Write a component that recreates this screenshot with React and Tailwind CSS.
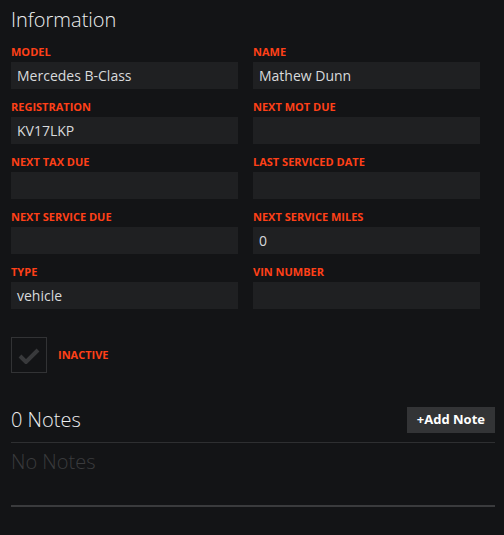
const fields = [
  ["Model", "Mercedes B-Class"],
  ["Name", "Mathew Dunn"],
  ["Registration", "KV17LKP"],
  ["Next MOT Due", ""],
  ["Next Tax Due", ""],
  ["Last Serviced Date", ""],
  ["Next Service Due", ""],
  ["Next Service Miles", "0"],
  ["Type", "vehicle"],
  ["VIN Number", ""],
];

const Field = ({ label, value }) => (
  <div className="pr-[15px] mb-[10px]">
    <div className="h-[15px] leading-[15px] text-[11px] font-bold uppercase text-[#ff4018]">
      {label}
    </div>
    <div className="mt-[3px] h-[27px] bg-[#1f2022] px-[6px] flex items-center text-[14px] text-[#d8dadc]">
      {value}
    </div>
  </div>
);

export default function App() {
  return (
    <div
      className="min-h-[535px] bg-[#131416] pl-[11px] pr-[9px] pt-[6px]"
      style={{ fontFamily: '"Open Sans", sans-serif' }}
    >
      <h2 className="h-[28px] leading-[28px] text-[20px] font-light text-[#eceeef]">
        Information
      </h2>

      <div className="mt-[10px] grid grid-cols-2">
        {fields.map(([label, value]) => (
          <Field key={label} label={label} value={value} />
        ))}
      </div>

      {/* Inactive toggle */}
      <div className="mt-[18px] flex items-center gap-[11px]">
        <div className="w-[36px] h-[36px] border border-[#323335] flex items-center justify-center">
          <svg width="22" height="17" viewBox="0 0 22 17">
            <path
              d="M2 9 L8 15 L20 3"
              fill="none"
              stroke="#38393b"
              strokeWidth="4"
            />
          </svg>
        </div>
        <span className="text-[11px] font-bold uppercase text-[#ff4018]">Inactive</span>
      </div>

      {/* Notes */}
      <div className="mt-[34px] flex items-center justify-between">
        <h3 className="text-[20px] font-light text-[#eceeef] leading-[26px]">0 Notes</h3>
        <button className="h-[26px] px-[10px] bg-[#333436] text-white text-[13px] font-bold">
          +Add Note
        </button>
      </div>
      <div className="mt-[9px] border-t border-[#2e2f31]" />
      <div className="mt-[6px] text-[20px] font-light text-[#3a3b3d] leading-[26px]">
        No Notes
      </div>
      <div className="mt-[30px] border-t-2 border-[#3a3b3d]" />
    </div>
  );
}
